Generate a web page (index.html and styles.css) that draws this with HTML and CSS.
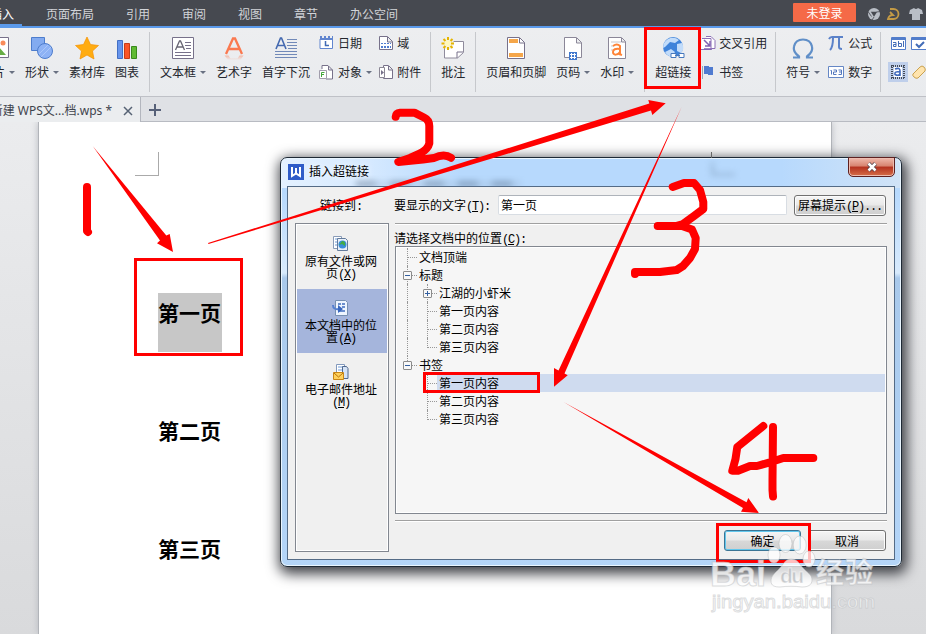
FILE: index.html
```html
<!DOCTYPE html>
<html lang="zh-CN">
<head>
<meta charset="utf-8">
<title>WPS 文字</title>
<link rel="stylesheet" href="styles.css">
</head>
<body>
<header class="menubar">
  <nav class="menus"><span class="menu active">插入</span><span class="menu">页面布局</span><span class="menu">引用</span><span class="menu">审阅</span><span class="menu">视图</span><span class="menu">章节</span><span class="menu">办公空间</span></nav>
  <button class="login">未登录</button>
  <svg class="topicons" width="58" height="14" viewBox="0 0 58 14">
    <circle cx="7" cy="7" r="6" fill="#b9bec6"/><path d="M3.800 4.800h6.400L7 9.800z" fill="#464950"/><path d="M1 4.500l3.500 5M7 10l-2 3M9.500 5l4-.5" stroke="#464950" stroke-width=".8"/>
    <path d="M23 2h3.500a5 5 0 0 1 0 10H21q1-4 5-4l-3-3" fill="none" stroke="#c39a45" stroke-width="1.800"/>
    <path d="M43 3l4-2q2 2 4 0l4 2 1 4h-3v6h-8V7h-3z" fill="#b9bec6"/>
  </svg>
</header>

<section class="ribbon">
  <div class="group first">
    <div class="tool"><svg width="22" height="24"><path d="M1.500 1.500h20v20h-20z" fill="#fff" stroke="#77718a"/><circle cx="16" cy="7" r="2.500" fill="#f98b5a"/><path d="M3 19l8-9 8 9z" fill="#67ad45"/></svg><span class="label">图片<i class="caret"></i></span></div>
    <div class="tool"><svg width="24" height="24"><path d="M1.500 1.500h13v13h-13z" fill="#83abf0" stroke="#4d7dcd"/><circle cx="15" cy="15" r="7.500" fill="#8db2f5" stroke="#4d7dcd"/><path d="M9 18l9-9M11 21L21 11" stroke="#aac7fa"/></svg><span class="label">形状<i class="caret"></i></span></div>
    <div class="tool"><svg width="24" height="24"><path d="M12 1l3.500 7.500 8 1-6 5.500 1.500 8-7-4-7 4 1.500-8-6-5.500 8-1z" fill="#ffac12" stroke="#f59100" stroke-width=".7"/></svg><span class="label">素材库</span></div>
    <div class="tool"><svg width="22" height="24"><path d="M1.500 4.500h5v18h-5z" fill="#6694ec" stroke="#426fc4"/><path d="M8.500 7.500h5v15h-5z" fill="#fa5527" stroke="#c63b17"/><path d="M15.500 10.500h5v12h-5z" fill="#60ba32" stroke="#398a1c"/></svg><span class="label">图表</span></div>
  </div>
  <div class="group">
    <div class="tool"><svg width="22" height="24"><path d="M.5 1.500h21v21H.5z" fill="#fff" stroke="#77718a"/><path d="M3.500 14L7.500 5h1l4 9M5 11h6" fill="none" stroke="#686674" stroke-width="1.300"/><path d="M13 6.500h6M13 9.500h6M14 12.500h5M3 16.500h16M3 19.500h16" stroke="#77718a"/></svg><span class="label">文本框<i class="caret"></i></span></div>
    <div class="tool"><svg width="22" height="24"><defs><linearGradient id="fade" x2="0" y2="1"><stop stop-color="#ff764a" stop-opacity=".45"/><stop offset="1" stop-color="#ff764a" stop-opacity="0"/></linearGradient></defs><path d="M3 18L10 2.500h2L19 18M6 13h10" fill="none" stroke="#fa7950" stroke-width="2.300"/><path d="M1.500 19.500h4l2 3h7l2-3h4l-3 4.500H5z" fill="url(#fade)"/></svg><span class="label">艺术字</span></div>
    <div class="tool"><svg width="24" height="24"><path d="M2 13L6.500 2h1L12 13M3.500 9.500h7" fill="none" stroke="#4469b0" stroke-width="1.600"/><path d="M13 3.500h10M13 6.500h10M13 9.500h10M14 12.500h9M1 15.500h22M1 18.500h22M1 21.500h22" stroke="#7189b8"/></svg><span class="label">首字下沉</span></div>
    <div class="pair">
      <div class="mini"><svg width="15" height="16"><path d="M1 4v9.500h12.500V4" fill="#fff" stroke="#6286cf"/><path d="M1 1h2v2h2V1h2v2h2V1h2v2h2V1h1v4H1z" fill="#6286cf"/><path d="M6.500 6v4.500H10" fill="none" stroke="#426bb5" stroke-width="1.500"/></svg>日期</div>
      <div class="mini"><svg width="15" height="16"><path d="M3 5V1.500h6l4.500 4.500v9H7M9.500 2v4h4" fill="#fff" stroke="#77718a"/><path d="M.5 6.500h7v8h-7z" fill="#fff" stroke="#a19dac"/><path d="M2.500 13V8.500h3M3 10.500h2" fill="none" stroke="#42a63a"/></svg>对象<i class="caret"></i></div>
    </div>
    <div class="pair two">
      <div class="mini"><svg width="14" height="16"><path d="M.5 1.500h8l5 5v8H.5zM8.500 2v5h5" fill="#fff" stroke="#77718a"/><path d="M2 8.500h10" stroke="#527dd0" stroke-dasharray="2 1"/><path d="M2 12h10" stroke="#527dd0" stroke-dasharray="2 1" stroke-width="2"/></svg>域</div>
      <div class="mini"><svg width="14" height="16"><path d="M4.500 1.500h5l4 4v9h-9zM9.500 2v4h4" fill="#fff" stroke="#77718a"/><path d="M.5 3.500h5v10h-5z" fill="#fff" stroke="#8b8795"/><path d="M2 6l3 2.500L2 11z" fill="#77718a"/></svg>附件</div>
    </div>
  </div>
  <div class="group">
    <div class="tool"><svg width="24" height="24"><path d="M4 5.500h18.500v11l-6 5.500H3.500V5z" fill="#fff" stroke="#8f8b9c"/><path d="M22 16h-6v6" fill="none" stroke="#77718a"/><circle cx="7" cy="7.500" r="6" fill="#f3f1e4"/><path d="M7 1v3M7 11v3M.5 7.500h3M10 7.500h3M2.500 3l2 2M11.500 3l-2 2M2.500 12l2-2M11.500 12l-2-2" stroke="#e5b400" stroke-width="2"/><circle cx="7" cy="7.500" r="3" fill="#fff8bc"/></svg><span class="label">批注</span></div>
  </div>
  <div class="group">
    <div class="tool"><svg width="20" height="24"><path d="M1.500 1.500h12l5 5v16h-17z" fill="#fff" stroke="#77718a"/><path d="M3 3h9v4H3zM3 17h14v4H3z" fill="#f5a64a"/><path d="M13.500 2v5h5" fill="none" stroke="#77718a"/></svg><span class="label">页眉和页脚</span></div>
    <div class="tool"><svg width="20" height="24"><path d="M1.500 1.500h12l5 5v15h-17zM13.500 2v5h5" fill="#fff" stroke="#8b8798"/><path d="M6 16h8v8H6z" fill="#4279ce"/><path d="M8.500 17v6M11.500 17v6M7 18.500h6M7 21.500h6" stroke="#fff"/></svg><span class="label">页码<i class="caret"></i></span></div>
    <div class="tool"><svg width="20" height="24"><path d="M1.500 1.500h13l4 4v17h-17zM14.500 2v4h4" fill="#fff" stroke="#8b8798"/><path d="M4 6h10M4 10h3M4 14h3" stroke="#c9c7ce"/><path d="M6 10q4-3 7 0v9M13 13q-7-1-7 3c0 4 5 3 7 0M12 18l3 1" fill="none" stroke="#ff8438" stroke-width="2"/></svg><span class="label">水印<i class="caret"></i></span></div>
  </div>
  <div class="group link">
    <div class="tool"><svg width="24" height="24"><circle cx="12" cy="11" r="10" fill="#3f83da"/><path d="M7 3q6-3 11 1l-4 3-5-1-5 5-2 1q0-6 5-9zM16 8l5-1q3 6-1 10l-4-2zM4 16l6-3 4 3-3 5q-5-1-7-5z" fill="#c2dcfa"/><path d="M10 17.500h5v4h-5zM18 17.500h5v4h-5zM14 19.500h5" fill="#fff" stroke="#4779bd"/></svg><span class="label">超链接</span></div>
    <div class="pair">
      <div class="mini"><svg width="15" height="17"><path d="M1 3.500h9v11H0M5 1.500h5l4 4v8h-3" fill="#fff" stroke="#8c70b5"/><path d="M3 5l6 6M9 6v5H4M3 14h8" fill="none" stroke="#8263b3" stroke-width="1.500"/></svg>交叉引用</div>
      <div class="mini"><svg width="15" height="16"><path d="M1.500 2v13" stroke="#9ba5b6"/><path d="M3 2h5v1h4v8H7v-1H3z" fill="#507bd0"/></svg>书签</div>
    </div>
  </div>
  <div class="group symbols">
    <div class="tool"><svg width="24" height="24"><path d="M2 21.500h6v-1c-4-3-6-6-5-10C4 6 7 3.500 12 3.500S20 6 21 10.500c1 4-1 7-5 10v1h6" fill="none" stroke="#608fc8" stroke-width="2.200"/></svg><span class="label">符号<i class="caret"></i></span></div>
    <div class="pair">
      <div class="mini"><svg width="16" height="16"><path d="M1 4q1-2 3-2h11M5 3q0 9-3 12M11 3v9q0 2 3 2" fill="none" stroke="#5b82c9" stroke-width="2"/></svg>公式</div>
      <div class="mini"><svg width="16" height="16"><path d="M.5 2.500h15v11H.5z" fill="#fff" stroke="#6587c5"/><path d="M2.500 6.500h1v4M5.500 6h3v2h-3v2.500h3M10.500 6h3v4.500h-3M11 8h2" fill="none" stroke="#5277bd"/></svg>数字</div>
    </div>
  </div>
  <div class="group controls">
    <svg width="16" height="15"><path d="M.5 1.500h14v12H.5z" fill="#fff" stroke="#527dcb"/><path d="M1 3h13" stroke="#527dcb" stroke-width="2"/><path d="M2 6.500h3v4H2.500v-2H5M7.500 5v5.500h3v-3h-3M12.500 5v6" fill="none" stroke="#426cb7"/></svg>
    <svg width="16" height="15"><path d="M.5 1.500h15v12H.5z" fill="#fff" stroke="#527dcb"/><path d="M1 3h14" stroke="#527dcb" stroke-width="2"/><path d="M5 8l3 3 5-5" fill="none" stroke="#426cb7" stroke-width="2"/></svg>
    <svg class="on" width="20" height="20"><path d="M3 4h14M3 16h14M4 3v14M16 3v14" stroke="#444b58" stroke-width="2" stroke-dasharray="1 1"/><path d="M6 5h8v10H6z" fill="#fff"/><path d="M7 7q5-2 5 2v5M12 10q-6-1-5 2.500 4 2 5-1" fill="none" stroke="#3e68bb" stroke-width="1.600"/></svg>
    <svg width="16" height="20"><path d="M2 12l7-7q2-2 4 0t1 4l-7 7q-2 1-4-1t-1-3z" fill="#ffe4ad" stroke="#c9a251"/></svg>
  </div>
</section>

<div class="tabs"><div class="doc-tab"><span class="doc-name">新建 WPS文...档.wps *</span><svg width="10" height="10"><path d="M1 1l8 8M9 1L1 9" stroke="#566274" stroke-width="1.500"/></svg></div><svg class="plus" width="12" height="12"><path d="M6 0v12M0 6h12" stroke="#566078" stroke-width="2"/></svg></div>

<main class="workspace">
  <article class="page">
    <i class="crop"></i>
    <h1><span class="selected">第一页</span></h1><h1><span>第二页</span></h1><h1><span>第三页</span></h1>
  </article>
</main>

<i class="crop-right"></i>
<section class="dialog">
  <i class="glass-text"></i><i class="glass-mark"></i>
  <div class="titlebar"><svg width="16" height="16"><path d="M0 0h16v16H0z" fill="#2f5cc8"/><path d="M4 3v9L8 9.500l4 2.500V3M8 4v5" fill="none" stroke="#fff" stroke-width="2"/></svg><span class="title">插入超链接</span><button class="close"><svg width="12" height="10" viewBox="0 0 12 10"><path d="M2.500 1.500l7 7M9.500 1.500l-7 7" stroke="#53424a" stroke-width="4"/><path d="M2.500 1.500l7 7M9.500 1.500l-7 7" stroke="#fff" stroke-width="2.500"/></svg></button></div>
  <div class="client">
    <aside class="targets">
      <div class="targets-title">链接到<span class="k">:</span></div>
      <div class="target-list">
        <div class="target"><svg width="18" height="18"><path d="M1.500 1.500h8v12h-8z" fill="#fff" stroke="#8a9cb8"/><path d="M3 4h5M3 7h4M3 10h4" stroke="#6f9ad7"/><path d="M5.500 3.500h8l2 2v10h-10z" fill="#e8f0fa" stroke="#647c9d"/><circle cx="10.500" cy="9.500" r="4" fill="#398cda"/><path d="M10 6q4 0 3 5l-3-2-3 1z" fill="#42ac43"/></svg><p>原有文件或网<br>页<span class="k">(<u>X</u>)</span></p></div>
        <div class="target chosen"><svg width="18" height="18"><path d="M3.500 1.500h10l2 2v13h-12z" fill="#eef5ff" stroke="#7790b2"/><path d="M6 5h3M10 5h3M10 8h3M6 12h7" stroke="#406dc0" stroke-width="1.500"/><path d="M1 6q0 5 6 4" fill="none" stroke="#547fd0" stroke-width="2"/><path d="M6 6l5 4-5 4z" fill="#3866bd"/></svg><p>本文档中的位<br>置<span class="k">(<u>A</u>)</span></p></div>
        <div class="target"><svg width="18" height="18"><path d="M4.500 1.500h8v13h-8z" fill="#fff" stroke="#8299bd"/><path d="M6 4h5M6 7h5" stroke="#6f9ad7"/><path d="M10.500 3.500h4l1.500 2v10h-5.500z" fill="#d5e3f6" stroke="#50698f"/><path d="M1.500 9.500h10v7h-10z" fill="#ffd15c" stroke="#c98616"/><path d="M2 10l4.500 4L11 10" fill="none" stroke="#b87209"/></svg><p>电子邮件地址<br><span class="k">(<u>M</u>)</span></p></div>
      </div>
    </aside>
    <div class="details">
      <div class="display-row"><label>要显示的文字<span class="k">(<u>T</u>):</span></label><input value="第一页"><button class="btn tip">屏幕提示<span class="k">(<u>P</u>)...</span></button></div>
      <div class="pick-title">请选择文档中的位置<span class="k">(<u>C</u>):</span></div>
      <div class="tree">
        <div class="row root start">文档顶端</div>
        <div class="row root has-box"><i class="box"></i>标题</div>
        <div class="row child has-box"><i class="box more"></i>江湖的小虾米</div>
        <div class="row child">第一页内容</div>
        <div class="row child">第二页内容</div>
        <div class="row child end">第三页内容</div>
        <div class="row root has-box finish"><i class="box"></i>书签</div>
        <div class="row child orphan picked"><span>第一页内容</span></div>
        <div class="row child orphan">第二页内容</div>
        <div class="row child orphan end">第三页内容</div>
      </div>
      <div class="actions"><button class="btn ok">确定</button><button class="btn cancel">取消</button></div>
    </div>
  </div>
</section>

<svg class="marks" width="926" height="634" viewBox="0 0 926 634">
  <g fill="none" stroke="red" stroke-width="3"><path d="M135.500 259.500h106v95h-106zM424.500 373.500h114v18h-114zM645.500 28.500h54v59h-54zM717.500 524.500h92v37h-92z"/></g>
  <g fill="red"><path d="M92.700 146L166.300 235.500 169.700 234 173 252 157 243.300 160 240.500zM208 243L649.300 103.500 648.300 100 665.700 103.300 652.300 115 651 110.500 208.500 244zM681.700 106.700L558.500 370.500 554 368V386.700L567.700 375.300 564.500 373.500zM563.500 402L746.500 502.300 748.300 498 759 513 741 511.700 743 508z"/></g>
  <g fill="none" stroke="red" stroke-width="8" stroke-linecap="round" stroke-linejoin="round"><path d="M87 187v44l1 1"/><path d="M395.700 116.700Q396 113 400 112.700H414.300L424 117.500Q429.300 120 429.300 126V143.300Q428 149 420 153.500L410 158 398.300 162 423 159.500 434 158Q444 153 451 157.700"/><path d="M672.700 187L684 183H694L700 190 703.300 202V209L694 216 683 224 676 226H657.700 682L692 229.500 695.700 238 695 249 690 258 683 266 676.700 270 660 272H635V274"/><path d="M763.300 426L737.300 447 735.500 459 732.300 470.700H738L750 466H757L773.300 461.300 783.300 458H813.300M773 427L772.500 480V490L773 496.500"/></g>
  <g class="watermark">
    <ellipse cx="774" cy="555" rx="6" ry="8"/><ellipse cx="785.500" cy="543.500" rx="6.500" ry="9"/><ellipse cx="799.700" cy="545" rx="6.500" ry="9"/><ellipse cx="809" cy="559" rx="6" ry="8"/><path d="M791 559c-6 0-8 6-12 10s-8 7-8 12 4 6 9 6c8-1 14-1 22 0 6 0 10-2 10-7s-4-7-8-11-6-10-13-10z"/>
    <text class="bai" x="710" y="586" textLength="56" lengthAdjust="spacingAndGlyphs">Bai</text><text class="du" x="780" y="583" textLength="24">du</text><text class="exp" x="816" y="583" textLength="57">经验</text><text class="url" x="712" y="608" textLength="163" lengthAdjust="spacingAndGlyphs">jingyan.baidu.com</text>
  </g>
</svg>
</body>
</html>
```

FILE: styles.css
```css
* { box-sizing: border-box; }
body { margin: 0; width: 926px; height: 634px; overflow: hidden; position: relative; font: 12px/16px "Noto Sans CJK SC", sans-serif; color: #24272d; background: #e5e7ea; }
button, input { font: inherit; padding: 0; }
svg { display: block; flex: none; }

.menubar { height: 28px; background: #464950; border-bottom: 2px solid #5b9aeb; display: flex; color: #d2d4d8; position: relative; }
.menus { display: flex; gap: 32px; margin-left: -10px; flex: 1; line-height: 27px; }
.menu.active { color: #fff; border-bottom: 2px solid #5b9aeb; width: 32px; margin-right: -8px; height: 26px; }
.login { width: 63px; height: 19px; margin-top: 3px; border: 0; border-radius: 1px; background: #f56a47; color: #fff; line-height: 18px; }
.topicons { margin: 7px 1px 0 11px; }

.ribbon { height: 69px; display: flex; background: linear-gradient(#edeef0, #e9ebee); border-bottom: 1px solid #bfc1c7; overflow: hidden; }
.group { height: 60px; margin-top: 4px; padding: 0 10px; display: flex; flex: none; gap: 10px; border-right: 1px solid #c6c8cc; }
.first { margin-left: -29px; }
.tool { display: flex; flex-direction: column; align-items: center; padding-top: 4px; white-space: nowrap; }
.tool svg { margin-bottom: 4px; margin-left: -4px; margin-right: -4px; }
.label { display: flex; align-items: center; }
.caret { border: 3px solid transparent; border-top-color: #697182; border-bottom: 0; margin-left: 4px; }
.pair { display: flex; flex-direction: column; gap: 13px; padding-top: 3px; margin-left: -1px; }
.pair.two { margin-left: -3px; margin-right: -1px; }
.mini { height: 16px; display: flex; align-items: center; white-space: nowrap; }
.mini svg { margin-right: 4px; }
.link { padding-right: 8px; }
.link .pair { margin-left: 0; }
.link .mini svg { margin-right: 3px; }
.symbols { padding-right: 8px; }
.symbols .pair { margin-left: -2px; }
.controls { display: grid; grid-template-columns: 20px 16px; grid-template-rows: 25px 20px; gap: 1px 3px; padding: 4px 0 0 7px; border: 0; }
.controls svg:first-child { margin-left: 3px; }
.controls .on { background: #bfcfeb; }

.tabs { height: 25px; display: flex; align-items: center; background: #dfe1e5; border-bottom: 1px solid #b8bbc2; }
.doc-tab { width: 141px; height: 25px; display: flex; align-items: center; justify-content: flex-end; padding: 3px 7px 0 0; gap: 11px; background: #ebedef; border-right: 1px solid #b3b6be; color: #3f444d; }
.doc-name { font-family: "Noto Sans", "Noto Sans CJK SC", sans-serif; white-space: nowrap; }
.plus { margin: 2px 0 0 8px; }

.workspace { height: 512px; padding-left: 38px; background: linear-gradient(#ebecee, #d9dadc); }
.page { width: 794px; height: 512px; background: #fff; border: solid #b1b4b9; border-width: 0 1px; padding: 30px 0 0 119px; box-shadow: 0 0 7px #b7bac0; clip-path: inset(0 -8px); }
.crop { display: block; width: 24px; height: 24px; margin-left: -23px; border: solid #aaa; border-width: 0 1px 1px 0; }
.crop-right { position: absolute; left: 711px; top: 152px; width: 1px; height: 6px; background: #666; z-index: 1; }
h1 { font-size: 21px; line-height: 38px; height: 59px; margin: 117px 0 0; color: #000; }
h1 + h1 { margin-top: 59px; }
h1 span { display: inline-block; height: 59px; width: 64px; }
.selected { background: #c7c7c7; }

.dialog { position: absolute; left: 280px; top: 157px; width: 622px; height: 410px; padding: 0 7px; border: 1px solid #1e2935; border-radius: 7px; background: linear-gradient(90deg, #e4f1ff 0, #d5e9ff 90px, transparent 180px, transparent 500px, #d0e3f7 620px) 0 0 / 100% 30px no-repeat, linear-gradient(#b7d9fd, #b7d9fd 35px, #d8eafc 115px, #a9c9eb 120px, #b4d5f8); box-shadow: inset 0 0 0 1px #eaf6ff, 2px 4px 13px 3px #404248; color: #000; }
.glass-text { position: absolute; left: 75px; top: 23px; width: 165px; height: 6px; background: repeating-linear-gradient(90deg, #4c617a 0 18px, #a2bddb 22px 34px); filter: blur(3px); opacity: .45; clip-path: inset(-6px -6px 0); }
.glass-mark { position: absolute; left: 430px; top: 4px; width: 24px; height: 14px; border: solid #7b97b5; border-width: 0 0 3px 3px; filter: blur(3px); opacity: .5; }
.titlebar { height: 28px; display: flex; align-items: flex-start; padding: 6px 0 0; gap: 5px; position: relative; }
.title { margin-top: -1px; text-shadow: 0 0 7px #fff; flex: 1; }
.close { width: 47px; height: 20px; margin: -7px -1px 0 0; border: 1px solid #5e2020; border-radius: 0 0 5px 5px; background: linear-gradient(#efb9ac, #d7836f 45%, #b4311f 50%, #d56e48); display: grid; place-items: center; box-shadow: inset 0 0 0 1px #eebcaf; }
.client { height: 374px; margin: 0 -1px; padding: 7px; border: 1px solid #546b86; background: #f0f0f0; display: flex; gap: 6px; position: relative; }
.targets { width: 94px; flex: none; }
.targets-title { height: 29px; padding: 3px 0 0 25px; }
.k { font-family: "Liberation Mono", monospace; letter-spacing: -1.2px; }
u { text-underline-offset: 1px; }
.target-list { height: 329px; border: 1px solid #828790; outline: 1px solid #fff; outline-offset: -2px; padding: 1px; }
.target { height: 64px; padding: 10px 2px 0 0; display: flex; flex-direction: column; align-items: center; }
.target p { margin: 2px 0 0; line-height: 12px; text-align: center; }
.chosen { background: #a5b5dc; }
.details { flex: 1; display: flex; flex-direction: column; }
.display-row { flex: none; height: 30px; padding-top: 1px; display: flex; align-items: flex-start; border-bottom: 1px solid #a0a0a0; box-shadow: 0 1px #fff; }
.display-row label { width: 104px; padding-top: 2px; margin-left: -1px; white-space: nowrap; }
input { width: 289px; height: 20px; border: 1px solid #d8dde3; border-top-color: #aeb3ba; border-radius: 2px; background: #fff; padding: 0 0 1px 2px; margin-right: 7px; color: #000; }
.btn { height: 21px; border: 1px solid #707070; border-radius: 3px; background: linear-gradient(#f5f5f5, #e9e9e9 48%, #d8d8d8 52%, #cfcfcf); box-shadow: inset 0 0 0 1px #fcfcfc; color: #000; line-height: 17px; white-space: nowrap; }
.tip { width: 92px; }
.pick-title { flex: none; height: 22px; padding-top: 6px; margin-left: -1px; }
.tree { flex: none; height: 268px; border: 1px solid #828790; outline: 1px solid #fff; outline-offset: -2px; background: #f6f6f6; padding: 1px; }
.row { height: 18px; line-height: 17px; padding-left: 22px; position: relative; }
.child { padding-left: 42px; }
.row::before { content: ""; position: absolute; left: 10px; top: 0; width: 9px; height: 18px; border-left: 1px dotted #969696; }
.root::after { content: ""; position: absolute; left: 11px; top: 9px; width: 9px; border-top: 1px dotted #969696; }
.child::after { content: ""; position: absolute; left: 30px; top: 0; width: 10px; height: 18px; border-left: 1px dotted #969696; background: repeating-linear-gradient(90deg, #999 0 1px, transparent 1px 2px) 0 9px / 9px 1px no-repeat; }
.end::after { height: 10px; }
.orphan::before { display: none; }
.finish::before { height: 9px; }
.box { position: absolute; z-index: 1; left: 6px; top: 5px; width: 9px; height: 9px; border: 1px solid #8b8b8b; border-radius: 1px; background: linear-gradient(#335fa0, #335fa0) center / 5px 1px no-repeat, #f8f8f8; }
.child .box { left: 26px; }
.more { background: linear-gradient(#335fa0, #335fa0) center / 5px 1px no-repeat, linear-gradient(#335fa0, #335fa0) center / 1px 5px no-repeat, #f8f8f8; }
.picked { padding-left: 40px; }
.picked span { display: block; height: 18px; padding-left: 2px; background: #cfdbef; }
.actions { flex: none; margin-top: 6px; padding-top: 9px; height: 36px; border-top: 1px solid #a0a0a0; box-shadow: inset 0 1px #fff; display: flex; justify-content: flex-end; gap: 7px; padding-right: 1px; }
.ok { width: 77px; border-color: #3b7595; box-shadow: inset 0 0 0 1px #62c7ed; }
.cancel { width: 78px; }

.marks { position: absolute; left: 0; top: 0; z-index: 2; pointer-events: none; }
.watermark { fill: #fff; fill-opacity: .75; stroke: #b9bbbe; stroke-opacity: .5; stroke-width: 1; font-family: "Liberation Sans", "Noto Sans CJK SC", sans-serif; }
.bai { font-size: 35px; font-weight: bold; }
.du { font-size: 21px; font-weight: bold; fill: #b6b9bd; stroke: #fff; }
.exp { font-size: 28px; font-weight: bold; }
.url { font-size: 19px; }
```
